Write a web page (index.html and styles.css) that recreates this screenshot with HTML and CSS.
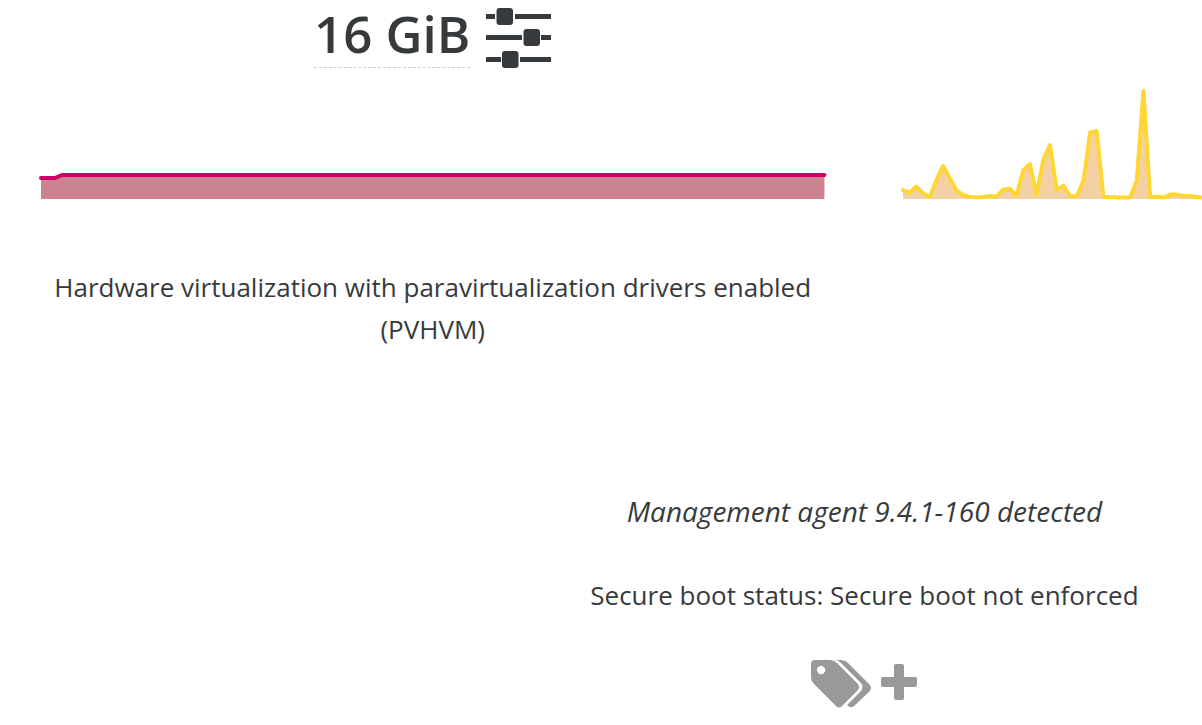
FILE: index.html
```
<!DOCTYPE html>
<html lang="en">
<head>
    <meta charset="UTF-8">
    <meta name="viewport" content="width=device-width, initial-scale=1">
    <title>VM overview</title>
    <link rel="stylesheet" href="styles.css">
</head>
<body>

<main class="overview">
    <div class="stats">
        <section class="stat">
            <h2 class="stat-title">
                <a class="editable" href="#memory">16 GiB</a>
                <button class="icon-btn" type="button" aria-label="Memory limits">
                    <svg class="sliders" viewBox="0 0 65 60">
                        <path d="M0 6h9v5H0zM29 6h36v5H29zM0 27h36v5H0zM55 27h10v5H55zM0 49h15v5H0zM34 49h31v5H34z"/>
                        <rect x="10.500" y="0" width="16.500" height="17" rx="3"/>
                        <rect x="37.500" y="21" width="16.500" height="17" rx="3"/>
                        <rect x="16" y="43" width="16.500" height="17" rx="3"/>
                    </svg>
                </button>
            </h2>
            <!-- Memory usage -->
            <svg class="chart memory" viewBox="0 0 784 120" preserveAspectRatio="none">
                <path class="area" d="M0 119V98H14L21 95H784V119z"/>
                <path class="line" d="M0 98H14L21 95H784"/>
            </svg>
            <p class="text">Hardware virtualization with paravirtualization drivers enabled (PVHVM)</p>
        </section>

        <section class="stat stat-last">
            <!-- Network throughput -->
            <svg class="chart network" viewBox="0 0 299 120" preserveAspectRatio="none">
                <path class="area" d="M0 119V110L6.7 112.7 13.4 106.5 20.1 113.3 26.8 117 33.5 100 40.1 86 46.8 98.3 53.5 110.3 60.2 115 66.9 117 73.6 117.3 80.3 117 87 116 93.7 116.6 100.4 109.7 107 108.7 113.7 116 120.4 90.5 127.1 84 133.8 115 140.5 80 147.2 65 153.9 110 160.6 105.6 167.3 116.3 174 116.3 180.7 101 187.4 52.5 194 51 200.7 117 207.4 117 214 117.4 220.7 117.4 227.4 117.4 234.1 101 240.8 11 247.5 117.3 254.2 116.6 260.9 117.6 267.6 114.6 274.3 114.6 281 116 287.7 116 294.4 117 299 117.5V119z"/>
                <path class="line" d="M0 110L6.7 112.7 13.4 106.5 20.1 113.3 26.8 117 33.5 100 40.1 86 46.8 98.3 53.5 110.3 60.2 115 66.9 117 73.6 117.3 80.3 117 87 116 93.7 116.6 100.4 109.7 107 108.7 113.7 116 120.4 90.5 127.1 84 133.8 115 140.5 80 147.2 65 153.9 110 160.6 105.6 167.3 116.3 174 116.3 180.7 101 187.4 52.5 194 51 200.7 117 207.4 117 214 117.4 220.7 117.4 227.4 117.4 234.1 101 240.8 11 247.5 117.3 254.2 116.6 260.9 117.6 267.6 114.6 274.3 114.6 281 116 287.7 116 294.4 117 299 117.5"/>
            </svg>
        </section>
    </div>

    <section class="details">
        <p class="text agent">Management agent 9.4.1-160 detected</p>
        <p class="text">Secure boot status: Secure boot not enforced</p>
        <div class="tags">
            <svg class="tags-icon" viewBox="0 0 60 48">
                <path fill-rule="evenodd" d="M4 0H19Q23 0 26 3L46 23Q50 27 46 31L31 46Q28 49 25 46L3 24Q0 21 0 18V4Q0 0 4 0zM10 5.800a4.200 4.200 0 1 0 .1 0z"/>
                <path d="M24 0H30Q34 0 37 3L58 24Q62 28 58 32L43 46Q40 49 36 45L49 32Q54 27 49 22L30 3Q27 0 24 0z"/>
            </svg>
            <button class="icon-btn" type="button" aria-label="Add tag">
                <svg class="plus" viewBox="0 0 36 36">
                    <path d="M15 0h6q2 0 2 2v11h11q2 0 2 2v6q0 2-2 2H23v11q0 2-2 2h-6q-2 0-2-2V23H2q-2 0-2-2v-6q0-2 2-2h11V2q0-2 2-2z"/>
                </svg>
            </button>
        </div>
    </section>
</main>

</body>
</html>
```
FILE: styles.css
```
body {
    margin: 0;
    background-color: #fff;
    color: #373a3c;
    font-family: "Segoe UI", "Open Sans", "Noto Sans", sans-serif;
    font-size: 26px;
    line-height: 42px;
}

.stats {
    display: grid;
    grid-template-columns: 72% 28%;
}

.stat {
    padding: 0 41px;
    text-align: center;
}

/* The network chart runs to the edge of the window */
.stat-last {
    padding: 80px 0 0 38px;
    overflow: hidden;
}

.stat-title {
    display: flex;
    justify-content: center;
    align-items: flex-start;
    gap: 16px;
    height: 80px;
    margin: 0;
    font-size: 51px;
    font-weight: 600;
    line-height: 67px;
}

.editable {
    color: inherit;
    text-decoration: none;
    border-bottom: 1px dashed #ccc;
}

.icon-btn {
    display: flex;
    padding: 0;
    border: none;
    background: none;
    color: inherit;
    cursor: pointer;
}

svg {
    display: block;
    fill: currentColor;
}

.sliders {
    width: 65px;
    height: 60px;
    margin-top: 8px;
}

/* Charts */
.chart {
    width: 100%;
    height: 120px;
    overflow: visible;
}

.line {
    fill: none;
    stroke-width: 4px;
    stroke-linecap: round;
    stroke-linejoin: round;
}

.memory .area {
    fill: #cc838f;
}

.memory .line {
    stroke: #cc0066;
}

.network .area {
    fill: #f4d1a4;
}

.network .line {
    stroke: #ffd633;
}

.text {
    margin: 0 0 42px;
}

.chart + .text {
    margin-top: 66px;
    margin-bottom: 140px;
}

.details {
    margin-left: 44%;
    padding-right: 2px;
    text-align: center;
}

.agent {
    font-size: 28px;
    font-style: italic;
}

.tags {
    display: flex;
    justify-content: center;
    align-items: center;
    gap: 10px;
    padding-top: 2px;
    color: #999;
}

.tags-icon {
    width: 60px;
    height: 48px;
}

.plus {
    width: 36px;
    height: 36px;
    margin-bottom: 4px;
}
```
